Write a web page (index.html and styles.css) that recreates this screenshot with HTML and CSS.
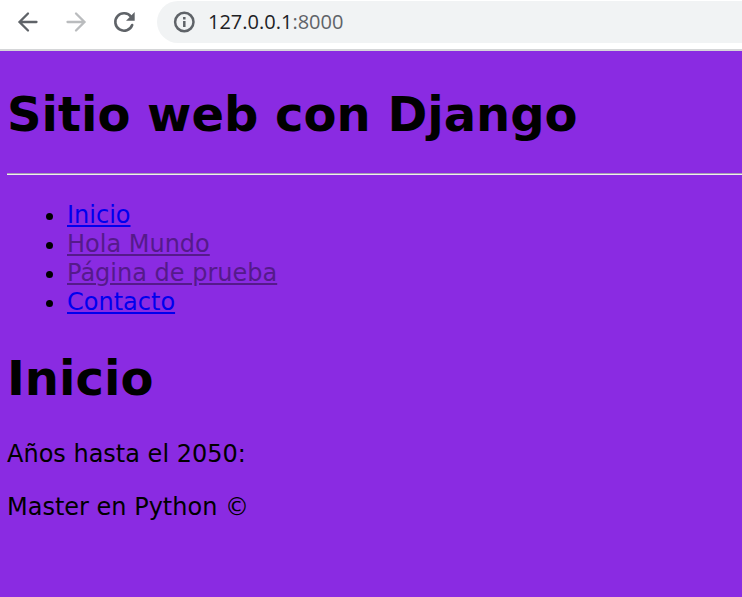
FILE: index.html
```html
<!DOCTYPE html>
<html lang="es">
<head>
<meta charset="utf-8">
<title>Sitio web con Django</title>
<link rel="stylesheet" href="styles.css">
</head>
<body>
<div class="toolbar">
  <button class="nav-button" type="button" aria-label="Atrás">
    <svg viewBox="0 0 24 24"><path d="M20.500 12H4M12 3.500L3.500 12l8.500 8.500"/></svg>
  </button>
  <button class="nav-button" type="button" aria-label="Adelante" disabled>
    <svg viewBox="0 0 24 24"><path d="M3.500 12H20M12 3.500l8.500 8.500-8.500 8.500"/></svg>
  </button>
  <button class="nav-button" type="button" aria-label="Recargar">
    <svg viewBox="0 0 24 24"><path class="arc" d="M19 6.800A8.700 8.700 0 1 0 20.200 15"/><path class="solid" d="M22.700 2v8.700h-8.700z"/></svg>
  </button>
  <div class="address">
    <svg class="info" viewBox="0 0 24 24"><circle cx="12.300" cy="12" r="9.200"/><path d="M12.300 11v6M12.300 7v2.400"/></svg>
    <span class="url">127.0.0.1<span class="port">:8000</span></span>
  </div>
</div>
<div class="page">
  <header>
    <h1>Sitio web con Django</h1>
  </header>
  <hr>
  <nav>
    <ul>
      <li><a href="#inicio">Inicio</a></li>
      <li><a class="seen" href="#hola-mundo">Hola Mundo</a></li>
      <li><a class="seen" href="#pagina-prueba">Página de prueba</a></li>
      <li><a href="#contacto">Contacto</a></li>
    </ul>
  </nav>
  <main>
    <h1>Inicio</h1>
    <p>Años hasta el 2050:</p>
  </main>
  <footer>
    <p>Master en Python ©</p>
  </footer>
</div>
</body>
</html>
```
FILE: styles.css
```css
* { box-sizing: border-box; }

body {
  margin: 0;
  min-height: 100vh;
  background: blueviolet;
  color: #000;
  font: 24px/29px Verdana, "DejaVu Sans", sans-serif;
}

.toolbar {
  display: flex;
  align-items: center;
  padding: 1px 0 6px 16px;
  background: #fff;
  border-bottom: 2px solid #d5d6d8;
}

.nav-button {
  display: flex;
  width: 24px;
  height: 24px;
  margin-right: 24px;
  padding: 0;
  border: 0;
  background: none;
  color: #5f6368;
}

.nav-button:disabled { color: #babcbe; }

svg {
  width: 24px;
  height: 24px;
  fill: none;
  stroke: currentColor;
  stroke-width: 2.3;
  stroke-linecap: round;
}

.arc { stroke-width: 2.6; }

.solid { fill: currentColor; stroke: none; }

.address {
  display: flex;
  flex: 1;
  align-items: center;
  height: 42px;
  margin-left: -3px;
  padding-left: 15px;
  border-radius: 21px 0 0 21px;
  background: #f1f3f4;
}

.info {
  color: #5f6368;
  stroke-linecap: butt;
  stroke-width: 2.5;
}

.url {
  margin-left: 12px;
  color: #202124;
  font: 20px/28px "Segoe UI", "Open Sans", "Noto Sans", sans-serif;
}

.port { color: #5f6368; }

.page { padding: 34px 0 0 7px; }

h1 {
  margin: 0;
  font-size: 48px;
  line-height: 58px;
}

hr {
  margin: 30px 0 26px;
  border: 0;
  border-top: 1px solid #a99bb6;
  border-bottom: 1px solid #eee;
}

ul {
  margin: 0 0 32px;
  padding-left: 60px;
}

a { color: #0000ee; }

.seen { color: #551a8b; }

p { margin: 0; }

main h1 { margin-bottom: 33px; }

footer { margin-top: 24px; }
```
